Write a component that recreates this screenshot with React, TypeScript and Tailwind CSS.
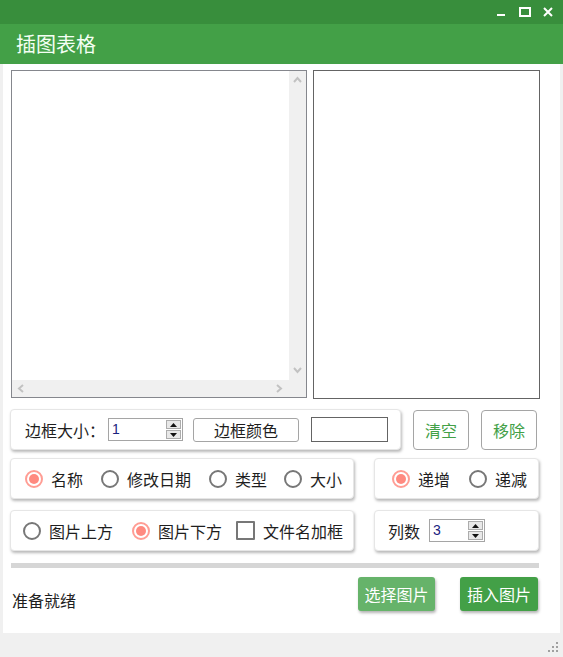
import React from "react";

const font = { fontFamily: '"Noto Sans CJK SC", "Noto Sans", sans-serif' };

function Radio({ label, checked }: { label: string; checked?: boolean }) {
  return (
    <div className="flex items-center">
      <span
        className={`flex h-[18px] w-[18px] items-center justify-center rounded-full border-2 ${
          checked ? "border-[#ff9d94]" : "border-[#777777]"
        }`}
      >
        {checked && <span className="h-[10px] w-[10px] rounded-full bg-[#ff8a80]" />}
      </span>
      <span className="ml-[8px] text-[16px] leading-[20px] text-[#1e1e1e]">{label}</span>
    </div>
  );
}

function Spinner({ value, width }: { value: string; width: string }) {
  return (
    <div className={`flex h-[23px] ${width} items-stretch border border-[#a5a5a5] bg-white`}>
      <span className="flex-1 pl-[3px] text-[14px] leading-[21px] text-[#1a237e]" style={{ fontFamily: '"Liberation Sans", sans-serif' }}>
        {value}
      </span>
      <div className="my-[1px] mr-[1px] flex w-[15px] flex-col gap-[1px]">
        <span className="flex flex-1 items-center justify-center border border-[#acacac] bg-[#e8e8e8]">
          <svg width="7" height="4" viewBox="0 0 7 4">
            <path d="M0 4 L3.5 0 L7 4 Z" fill="#111" />
          </svg>
        </span>
        <span className="flex flex-1 items-center justify-center border border-[#acacac] bg-[#e8e8e8]">
          <svg width="7" height="4" viewBox="0 0 7 4">
            <path d="M0 0 L3.5 4 L7 0 Z" fill="#111" />
          </svg>
        </span>
      </div>
    </div>
  );
}

function Chevron({ dir }: { dir: "up" | "down" | "left" | "right" }) {
  const paths = {
    up: "M1 6 L4.5 2 L8 6",
    down: "M1 2 L4.5 6 L8 2",
    left: "M6 1 L2 4.5 L6 8",
    right: "M2 1 L6 4.5 L2 8",
  };
  return (
    <svg width="9" height="9" viewBox="0 0 9 9">
      <path d={paths[dir]} fill="none" stroke="#c2c2c2" strokeWidth="2" />
    </svg>
  );
}

const panel =
  "flex items-center rounded-[4px] border border-[#e6e6e6] bg-white shadow-[1px_2px_3px_rgba(0,0,0,0.28)]";

export default function App() {
  return (
    <div className="flex h-[657px] w-[563px] flex-col overflow-hidden bg-[#f0f0f0]" style={font}>
      <div className="flex h-[24px] items-center justify-end bg-[#388e3c] pr-[8px]">
        <svg width="60" height="24" viewBox="0 0 60 24">
          <rect x="2" y="14" width="8" height="2" fill="#fff" />
          <rect x="25" y="8" width="10" height="8" fill="none" stroke="#fff" strokeWidth="2" />
          <path d="M49 8 L57 16 M57 8 L49 16" stroke="#fff" strokeWidth="2" />
        </svg>
      </div>
      <div className="flex h-[40px] items-center bg-[#43a047] pl-[16px] text-[20px] text-[#f4fff4]">插图表格</div>

      <div className="mx-[3px] flex h-[569px] flex-col bg-white">
        <div className="ml-[8px] mt-[6px] flex h-[329px] gap-[6px]">
          <div className="flex h-[328px] w-[296px] flex-col border border-[#85878d]">
            <div className="flex flex-1">
              <div className="flex-1 bg-white" />
              <div className="flex w-[17px] flex-col items-center justify-between bg-[#f0f0f0] py-[5px]">
                <Chevron dir="up" />
                <Chevron dir="down" />
              </div>
            </div>
            <div className="flex h-[17px] items-center justify-between bg-[#f0f0f0] pl-[5px] pr-[22px]">
              <Chevron dir="left" />
              <Chevron dir="right" />
            </div>
          </div>
          <div className="h-[329px] w-[227px] border border-[#646464]" />
        </div>

        <div className="ml-[7px] mt-[10px] flex h-[41px] items-center">
          <div className={`${panel} h-[41px] w-[391px] pl-[14px]`}>
            <span className="text-[16px] leading-[20px] text-[#1e1e1e]">边框大小：</span>
            <div className="ml-[3px]">
              <Spinner value="1" width="w-[75px]" />
            </div>
            <button className="ml-[10px] h-[24px] w-[106px] rounded-[3px] border border-[#a5a5a5] bg-white text-[16px] leading-[20px] text-[#1e1e1e]">
              边框颜色
            </button>
            <div className="ml-[12px] h-[25px] w-[77px] border border-[#646464]" />
          </div>
          <button className="ml-[12px] h-[40px] w-[56px] rounded-[4px] border border-[#a5a5a5] bg-white text-[16px] text-[#43a047]">
            清空
          </button>
          <button className="ml-[12px] h-[40px] w-[56px] rounded-[4px] border border-[#a5a5a5] bg-white text-[16px] text-[#43a047]">
            移除
          </button>
        </div>

        <div className="ml-[7px] mt-[8px] flex h-[41px] gap-[20px]">
          <div className={`${panel} w-[344px] pl-[14px]`}>
            <Radio label="名称" checked />
            <div className="ml-[18px]">
              <Radio label="修改日期" />
            </div>
            <div className="ml-[18px]">
              <Radio label="类型" />
            </div>
            <div className="ml-[17px]">
              <Radio label="大小" />
            </div>
          </div>
          <div className={`${panel} w-[165px] pl-[17px]`}>
            <Radio label="递增" checked />
            <div className="ml-[19px]">
              <Radio label="递减" />
            </div>
          </div>
        </div>

        <div className="ml-[7px] mt-[11px] flex h-[41px] gap-[20px]">
          <div className={`${panel} w-[344px] pl-[12px]`}>
            <Radio label="图片上方" />
            <div className="ml-[19px]">
              <Radio label="图片下方" checked />
            </div>
            <div className="ml-[14px] flex items-center">
              <span className="h-[19px] w-[19px] rounded-[1px] border-2 border-[#777777]" />
              <span className="ml-[8px] text-[16px] leading-[20px] text-[#1e1e1e]">文件名加框</span>
            </div>
          </div>
          <div className={`${panel} w-[165px] pl-[13px]`}>
            <span className="text-[16px] leading-[20px] text-[#1e1e1e]">列数</span>
            <div className="ml-[9px]">
              <Spinner value="3" width="w-[56px]" />
            </div>
          </div>
        </div>

        <div className="ml-[8px] mt-[12px] h-[5px] w-[528px] bg-[#d6d6d6]" />

        <div className="mt-[9px] flex h-[34px] items-center">
          <span className="ml-[9px] mt-[12px] text-[16px] leading-[20px] text-[#1e1e1e]">准备就绪</span>
          <button className="ml-[282px] h-[34px] w-[77px] rounded-[3px] bg-[#66b36a] text-[16px] text-white shadow-[1px_2px_3px_rgba(0,0,0,0.3)]">
            选择图片
          </button>
          <button className="ml-[25px] h-[34px] w-[78px] rounded-[3px] bg-[#43a047] text-[16px] text-white shadow-[1px_2px_3px_rgba(0,0,0,0.3)]">
            插入图片
          </button>
        </div>
      </div>

      <div className="flex flex-1 items-end justify-end pb-[5px] pr-[5px]">
        <svg width="10" height="10" viewBox="0 0 10 10">
          <rect x="8" y="0" width="2" height="2" fill="#a0a0a0" />
          <rect x="4" y="4" width="2" height="2" fill="#a0a0a0" />
          <rect x="8" y="4" width="2" height="2" fill="#a0a0a0" />
          <rect x="0" y="8" width="2" height="2" fill="#a0a0a0" />
          <rect x="4" y="8" width="2" height="2" fill="#a0a0a0" />
          <rect x="8" y="8" width="2" height="2" fill="#a0a0a0" />
        </svg>
      </div>
    </div>
  );
}
